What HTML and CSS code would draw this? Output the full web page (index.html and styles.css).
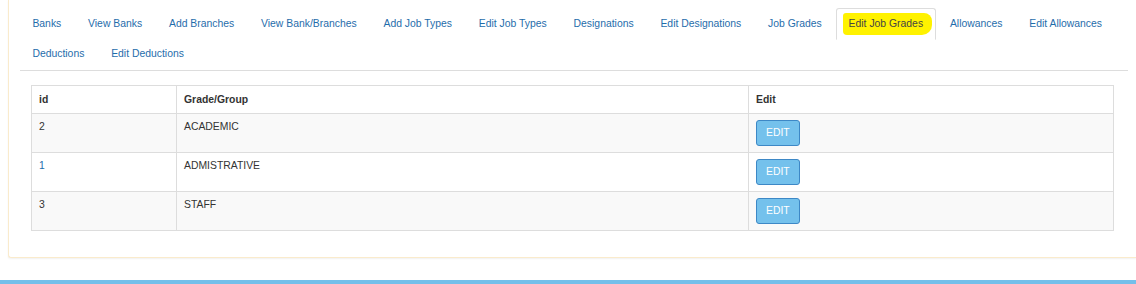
FILE: index.html
```html
<!DOCTYPE html>
<html lang="en">
<head>
    <meta charset="UTF-8">
    <title>Edit Job Grades</title>
    <link rel="stylesheet" href="styles.css">
</head>
<body>

    <!-- Settings Panel -->
    <div class="panel">
        <div class="panel-body">

            <!-- Tabs -->
            <ul class="nav-tabs">
                <li><a href="#">Banks</a></li>
                <li><a href="#">View Banks</a></li>
                <li><a href="#">Add Branches</a></li>
                <li><a href="#">View Bank/Branches</a></li>
                <li><a href="#">Add Job Types</a></li>
                <li><a href="#">Edit Job Types</a></li>
                <li><a href="#">Designations</a></li>
                <li><a href="#">Edit Designations</a></li>
                <li><a href="#">Job Grades</a></li>
                <li class="active"><a href="#"><span class="mark">Edit Job Grades</span></a></li>
                <li><a href="#">Allowances</a></li>
                <li><a href="#">Edit Allowances</a></li>
                <li><a href="#">Deductions</a></li>
                <li><a href="#">Edit Deductions</a></li>
            </ul>

            <!-- Grades Table -->
            <div class="tab-content">
                <table class="grades">
                    <thead>
                        <tr>
                            <th class="col-id">id</th>
                            <th class="col-grade">Grade/Group</th>
                            <th>Edit</th>
                        </tr>
                    </thead>
                    <tbody>
                        <tr>
                            <td>2</td>
                            <td>ACADEMIC</td>
                            <td><button type="button" class="btn-edit">EDIT</button></td>
                        </tr>
                        <tr>
                            <td><a href="#">1</a></td>
                            <td>ADMISTRATIVE</td>
                            <td><button type="button" class="btn-edit">EDIT</button></td>
                        </tr>
                        <tr>
                            <td>3</td>
                            <td>STAFF</td>
                            <td><button type="button" class="btn-edit">EDIT</button></td>
                        </tr>
                    </tbody>
                </table>
            </div>

        </div>
    </div>

    <!-- Footer bar -->
    <div class="footer-bar"></div>

</body>
</html>
```

FILE: styles.css
```css
body {
    font-family: "Liberation Sans", Arial, sans-serif;
    font-size: 10.4px;
    line-height: 1.42857;
    color: #333;
    background-color: #fff;
    margin: 0;
    padding: 0;
}

a {
    color: #1f6dab;
    text-decoration: none;
}

/* Panel */
.panel {
    margin-left: 8px;
    border: 1px solid #faebcc;
    border-top: 0;
    border-right: 0;
    border-radius: 0 0 0 3px;
    box-shadow: 0 1px 2px rgba(0, 0, 0, 0.06);
    background-color: #fff;
}

.panel-body {
    padding: 8px 8px 10px 11px;
}

/* Tabs */
.nav-tabs {
    list-style: none;
    margin: 0;
    padding: 0;
    display: flex;
    flex-wrap: wrap;
    border-bottom: 1px solid #ddd;
}

.nav-tabs li {
    margin-right: 2px;
    margin-bottom: -1px;
}

.nav-tabs a {
    display: block;
    padding: 7.5px 11.4px;
    border: 1px solid transparent;
    border-radius: 3px 3px 0 0;
}

.nav-tabs .active a {
    color: #444;
    background-color: #fff;
    border-color: #ddd #ddd transparent;
}

.mark {
    background-color: #fff200;
    padding: 5px 9px 6px 6px;
    margin: 0 -9px 0 -6px;
    border-radius: 3px 8px 10px 4px;
}

/* Table */
.tab-content {
    padding: 14px 14px 0 11px;
}

.grades {
    width: 100%;
    border-collapse: collapse;
    border: 1px solid #ddd;
    margin-bottom: 16px;
}

.grades th,
.grades td {
    text-align: left;
    vertical-align: top;
    padding: 6px 7px;
    border: 1px solid #ddd;
}

.grades th {
    font-weight: bold;
    line-height: 15px;
}

.grades tbody tr:nth-child(odd) {
    background-color: #f9f9f9;
}

.col-id {
    width: 130px;
}

.col-grade {
    width: 557px;
}

.btn-edit {
    font-family: inherit;
    font-size: 10.4px;
    line-height: 14px;
    color: #fff;
    background-color: #74c1ec;
    border: 1px solid #3d88c6;
    border-radius: 3px;
    padding: 5px 9px;
    cursor: pointer;
}

/* Footer bar */
.footer-bar {
    margin-top: 22px;
    height: 10px;
    background-color: #74bfea;
}
```
